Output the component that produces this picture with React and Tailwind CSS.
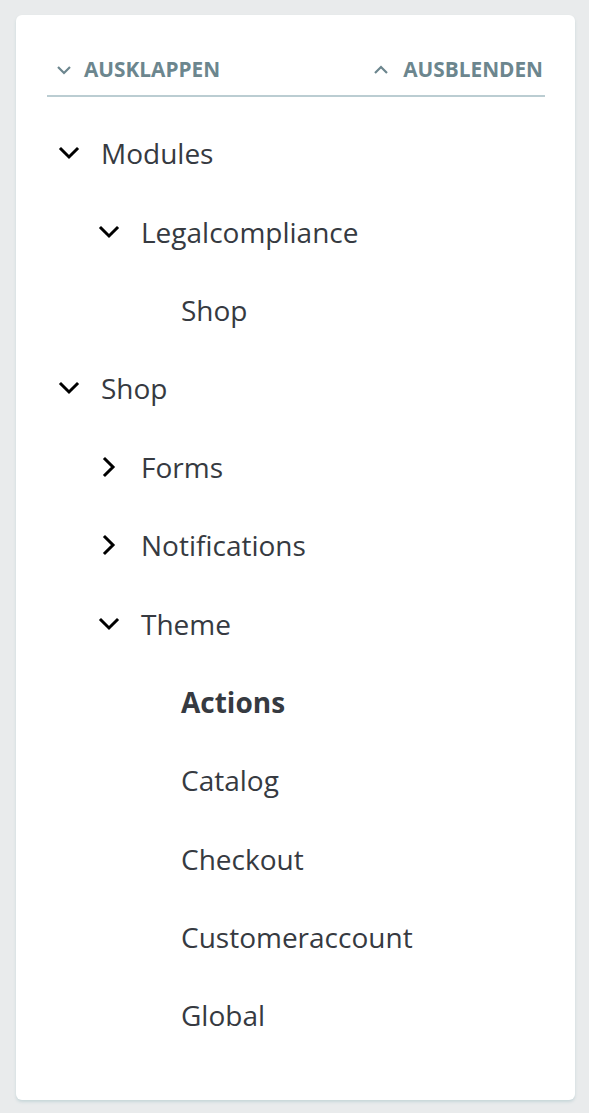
import React from 'react';

const tree = [
  { label: 'Modules', level: 0, icon: 'down' },
  { label: 'Legalcompliance', level: 1, icon: 'down' },
  { label: 'Shop', level: 2 },
  { label: 'Shop', level: 0, icon: 'down' },
  { label: 'Forms', level: 1, icon: 'right' },
  { label: 'Notifications', level: 1, icon: 'right' },
  { label: 'Theme', level: 1, icon: 'down' },
  { label: 'Actions', level: 2, active: true },
  { label: 'Catalog', level: 2 },
  { label: 'Checkout', level: 2 },
  { label: 'Customeraccount', level: 2 },
  { label: 'Global', level: 2 },
];

const indent = ['pl-0', 'pl-[40px]', 'pl-[80px]'];

function Chevron({ dir }) {
  if (dir === 'right') {
    return (
      <svg width="14" height="22" viewBox="0 0 14 22" fill="none">
        <polyline points="3,3 11,11 3,19" stroke="#000" strokeWidth="3" strokeLinecap="square" />
      </svg>
    );
  }
  return (
    <svg width="22" height="14" viewBox="0 0 22 14" fill="none">
      <polyline points="3,3 11,11 19,3" stroke="#000" strokeWidth="3" strokeLinecap="square" />
    </svg>
  );
}

function SmallChevron({ up }) {
  return (
    <svg width="16" height="10" viewBox="0 0 16 10" fill="none">
      <polyline
        points={up ? '2,8 8,2 14,8' : '2,2 8,8 14,2'}
        stroke="#6c868e"
        strokeWidth="2.2"
      />
    </svg>
  );
}

export default function App() {
  return (
    <div className="min-h-screen bg-[#e9ebec] pt-[15px]" style={{ fontFamily: '"Open Sans", sans-serif' }}>
      <div className="ml-[16px] w-[559px] rounded-md bg-white shadow-[0_2px_3px_rgba(160,190,195,0.45)] px-[30px] pl-[31px] pt-[40px] pb-[45px]">
        <div className="flex items-center justify-between border-b-2 border-[#bbcdd2] pl-[9px] pr-[2px] pb-[10px]">
          <button className="flex items-center gap-[12px] h-[30px] text-[20.8px] font-bold uppercase text-[#6c868e]">
            <SmallChevron />
            Ausklappen
          </button>
          <button className="flex items-center gap-[14px] h-[30px] text-[20.8px] font-bold uppercase text-[#6c868e]">
            <SmallChevron up />
            Ausblenden
          </button>
        </div>
        <ul className="mt-[17px]">
          {tree.map((item, i) => (
            <li key={i} className={`flex items-center h-[78.4px] ${indent[item.level]}`}>
              <span className="flex w-[44px] mr-[10px] items-center justify-center">
                {item.icon && <Chevron dir={item.icon} />}
              </span>
              <span className={`text-[28px] text-[#363a41] ${item.active ? 'font-bold' : 'font-normal'}`}>
                {item.label}
              </span>
            </li>
          ))}
        </ul>
      </div>
    </div>
  );
}
